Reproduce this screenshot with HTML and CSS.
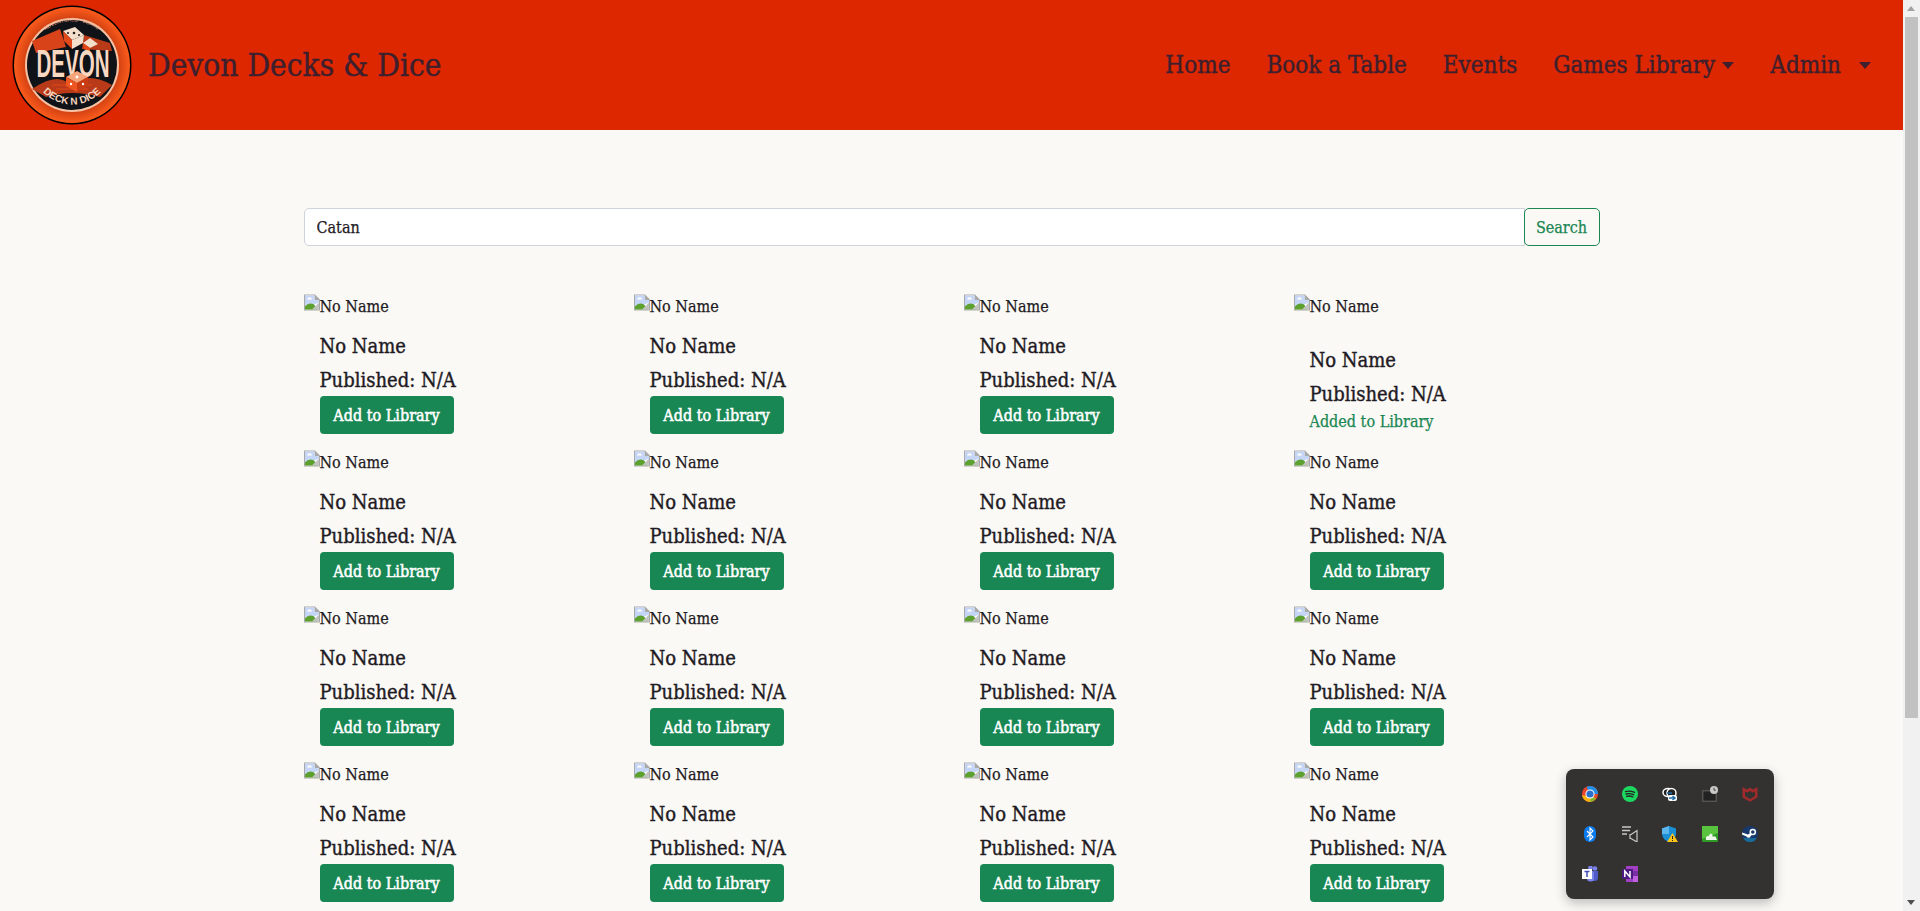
FILE: index.html
```html
<!DOCTYPE html>
<html lang="en">
<head>
  <meta charset="UTF-8">
  <title>Devon Decks &amp; Dice</title>
  <link rel="stylesheet" href="styles.css">
</head>
<body>
  <div class="window">
    <div class="page">
      <!-- Navbar -->
      <nav class="navbar">
        <a class="brand" href="#">
          <svg class="logo" viewBox="0 0 120 120">
            <defs>
              <path id="logo-arc" d="M22 72 A40 40 0 0 0 98 72"/>
              <path id="logo-top" d="M20 42 A44 44 0 0 1 100 42"/>
              <radialGradient id="logo-ring">
                <stop offset=".75" stop-color="#c83a10"/>
                <stop offset="1" stop-color="#fb5c1c"/>
              </radialGradient>
            </defs>
            <circle cx="60" cy="60" r="59.500" fill="#000"/>
            <circle cx="60" cy="60" r="58" fill="url(#logo-ring)"/>
            <circle cx="60" cy="60" r="47" fill="#f6c3a6"/>
            <circle cx="60" cy="60" r="45" fill="#0f1216"/>
            <path d="M20 36 L48 24 L54 42 L24 48 Z" fill="#d8431a"/>
            <path d="M72 30 L98 38 L100 46 L70 44 Z" fill="#b83a18"/>
            <path d="M20 84 Q46 66 58 80 Q76 66 100 80 L88 92 Q60 84 34 92 Z" fill="#b83a18"/>
            <path d="M44 84h32M40 80h40" stroke="#e2481a" stroke-width="1"/>
            <!-- top dice -->
            <path d="M51 26 L63 22 L72 30 L60 35 Z" fill="#f4dfcc"/>
            <path d="M51 26 L60 35 L60 44 L52 36 Z" fill="#e2481a"/>
            <path d="M60 35 L72 30 L71 38 L60 44 Z" fill="#f4dfcc"/>
            <circle cx="62" cy="28" r="1.300" fill="#222"/>
            <circle cx="56" cy="28" r="1.100" fill="#222"/>
            <circle cx="67" cy="30" r="1.100" fill="#222"/>
            <path d="M71 38 L78 33 L86 39 L78 43 Z" fill="#f4dfcc"/>
            <path d="M71 38 L78 43 L78 48 L72 44 Z" fill="#e2481a"/>
            <text class="logo-small" font-size="5"><textPath href="#logo-top" startOffset="50%" text-anchor="middle">ADVENTURES &#183; BOARD</textPath></text>
            <text class="logo-title" transform="translate(61 72) scale(.54 1)">DEVON</text>
            <!-- bottom dice -->
            <path d="M54 72 L65 66 L76 72 L65 78 Z" fill="#f6a47a"/>
            <path d="M54 72 L65 78 L65 87 L54 81 Z" fill="#ef5520"/>
            <path d="M65 78 L76 72 L76 81 L65 87 Z" fill="#c93c14"/>
            <circle cx="65" cy="72" r="1.400" fill="#fff"/>
            <circle cx="59" cy="79" r="1.200" fill="#fff"/>
            <circle cx="71" cy="79" r="1.200" fill="#fff"/>
            <text class="logo-arc" font-size="10"><textPath href="#logo-arc" startOffset="50%" text-anchor="middle">DECK N DICE</textPath></text>
          </svg>
          <span class="brand-name">Devon Decks &amp; Dice</span>
        </a>
        <ul class="nav-links">
          <li class="nav-item"><a href="#">Home</a></li>
          <li class="nav-item"><a href="#">Book a Table</a></li>
          <li class="nav-item"><a href="#">Events</a></li>
          <li class="nav-item"><a href="#">Games Library</a><i class="caret"></i></li>
          <li class="nav-item nav-admin"><a href="#">Admin</a><i class="caret"></i></li>
        </ul>
      </nav>

      <main class="container">
        <!-- Search -->
        <form class="search">
          <input class="search-input" type="text" value="Catan">
          <button class="search-btn" type="button">Search</button>
        </form>

        <!-- Results -->
        <div class="results">
          <div class="game">
            <div class="game-img"><svg class="broken"><use href="#broken-img"/></svg>No Name</div>
            <div class="game-body"><h5>No Name</h5><p>Published: N/A</p><button class="add-btn" type="button">Add to Library</button></div>
          </div>
          <div class="game">
            <div class="game-img"><svg class="broken"><use href="#broken-img"/></svg>No Name</div>
            <div class="game-body"><h5>No Name</h5><p>Published: N/A</p><button class="add-btn" type="button">Add to Library</button></div>
          </div>
          <div class="game">
            <div class="game-img"><svg class="broken"><use href="#broken-img"/></svg>No Name</div>
            <div class="game-body"><h5>No Name</h5><p>Published: N/A</p><button class="add-btn" type="button">Add to Library</button></div>
          </div>
          <div class="game">
            <div class="game-img"><svg class="broken"><use href="#broken-img"/></svg>No Name</div>
            <div class="game-body"><h5>No Name</h5><p>Published: N/A</p><div class="added">Added to Library</div></div>
          </div>

          <div class="game">
            <div class="game-img"><svg class="broken"><use href="#broken-img"/></svg>No Name</div>
            <div class="game-body"><h5>No Name</h5><p>Published: N/A</p><button class="add-btn" type="button">Add to Library</button></div>
          </div>
          <div class="game">
            <div class="game-img"><svg class="broken"><use href="#broken-img"/></svg>No Name</div>
            <div class="game-body"><h5>No Name</h5><p>Published: N/A</p><button class="add-btn" type="button">Add to Library</button></div>
          </div>
          <div class="game">
            <div class="game-img"><svg class="broken"><use href="#broken-img"/></svg>No Name</div>
            <div class="game-body"><h5>No Name</h5><p>Published: N/A</p><button class="add-btn" type="button">Add to Library</button></div>
          </div>
          <div class="game">
            <div class="game-img"><svg class="broken"><use href="#broken-img"/></svg>No Name</div>
            <div class="game-body"><h5>No Name</h5><p>Published: N/A</p><button class="add-btn" type="button">Add to Library</button></div>
          </div>

          <div class="game">
            <div class="game-img"><svg class="broken"><use href="#broken-img"/></svg>No Name</div>
            <div class="game-body"><h5>No Name</h5><p>Published: N/A</p><button class="add-btn" type="button">Add to Library</button></div>
          </div>
          <div class="game">
            <div class="game-img"><svg class="broken"><use href="#broken-img"/></svg>No Name</div>
            <div class="game-body"><h5>No Name</h5><p>Published: N/A</p><button class="add-btn" type="button">Add to Library</button></div>
          </div>
          <div class="game">
            <div class="game-img"><svg class="broken"><use href="#broken-img"/></svg>No Name</div>
            <div class="game-body"><h5>No Name</h5><p>Published: N/A</p><button class="add-btn" type="button">Add to Library</button></div>
          </div>
          <div class="game">
            <div class="game-img"><svg class="broken"><use href="#broken-img"/></svg>No Name</div>
            <div class="game-body"><h5>No Name</h5><p>Published: N/A</p><button class="add-btn" type="button">Add to Library</button></div>
          </div>

          <div class="game">
            <div class="game-img"><svg class="broken"><use href="#broken-img"/></svg>No Name</div>
            <div class="game-body"><h5>No Name</h5><p>Published: N/A</p><button class="add-btn" type="button">Add to Library</button></div>
          </div>
          <div class="game">
            <div class="game-img"><svg class="broken"><use href="#broken-img"/></svg>No Name</div>
            <div class="game-body"><h5>No Name</h5><p>Published: N/A</p><button class="add-btn" type="button">Add to Library</button></div>
          </div>
          <div class="game">
            <div class="game-img"><svg class="broken"><use href="#broken-img"/></svg>No Name</div>
            <div class="game-body"><h5>No Name</h5><p>Published: N/A</p><button class="add-btn" type="button">Add to Library</button></div>
          </div>
          <div class="game">
            <div class="game-img"><svg class="broken"><use href="#broken-img"/></svg>No Name</div>
            <div class="game-body"><h5>No Name</h5><p>Published: N/A</p><button class="add-btn" type="button">Add to Library</button></div>
          </div>
        </div>
      </main>
    </div>

    <!-- Scrollbar -->
    <div class="scrollbar">
      <i class="arrow-up"></i>
      <div class="track"><div class="thumb"></div></div>
      <i class="arrow-down"></i>
    </div>
  </div>

  <!-- Tray popup -->
  <div class="tray">
    <!-- browser -->
    <svg viewBox="0 0 16 16"><circle cx="8" cy="8" r="8" fill="#e8452c"/><path d="M8 0A8 8 0 0 1 16 8L11 8 5 2.500 5 .6Z" fill="#1f8fe8"/><path d="M0 9A8 8 0 0 0 8 16 8 8 0 0 0 14 12L9 11Z" fill="#f9b10f"/><path d="M8 16A8 8 0 0 0 14 12L9 11Z" fill="#7cb82f"/><circle cx="8" cy="8" r="4.600" fill="#fff"/><circle cx="8" cy="8" r="3.600" fill="#2a6fc9"/></svg>
    <!-- spotify -->
    <svg viewBox="0 0 16 16"><circle cx="8" cy="8" r="8" fill="#1ed760"/><path d="M3.500 5.600Q8 4.300 12.500 6.400M4 8Q8 7 11.800 8.800M4.600 10.300Q8 9.500 11 11" fill="none" stroke="#222" stroke-width="1.300" stroke-linecap="round"/></svg>
    <!-- link -->
    <svg viewBox="0 0 16 16"><ellipse cx="6" cy="6.500" rx="5" ry="4" fill="#222" stroke="#fff" stroke-width="1.500"/><ellipse cx="9.500" cy="7" rx="4.500" ry="4.500" fill="#222" stroke="#fff" stroke-width="1.500"/><rect x="6" y="9" width="9" height="6" rx="2" fill="#fff"/><path d="M7 12h6M10.500 10l2.500 2-2.500 2M5 7h5" fill="none" stroke="#1f6aa8" stroke-width="1.500"/></svg>
    <!-- capture -->
    <svg viewBox="0 0 16 16"><rect x=".7" y="4.700" width="13.600" height="10.600" fill="#222" stroke="#555" stroke-width="1.400"/><circle cx="12" cy="4" r="4" fill="#c8c8c8"/><path d="M12 1.800v2.400h1.800" fill="none" stroke="#444" stroke-width="1"/></svg>
    <!-- mcafee -->
    <svg viewBox="0 0 16 16"><path d="M.5 1L4.800 3.500 8 1.800 11.200 3.500 15.500 1V11.500L8 15.800.5 11.500ZM3 5.500V10L8 13 13 10V5.500L11 6.800 8 5 5 6.800Z" fill="#a12a2c"/></svg>

    <!-- bluetooth -->
    <svg viewBox="0 0 16 16"><rect x="2" y="0" width="12" height="16" rx="6" fill="#0a7cf0"/><path d="M5 5l6 6-3 3V2l3 3-6 6" fill="none" stroke="#fff" stroke-width="1.100"/></svg>
    <!-- speaker -->
    <svg viewBox="0 0 16 16"><path d="M0 1h9M0 4.500h8M0 8h5" stroke="#c8c8c8" stroke-width="1.300"/><path d="M9 8.500L15 4.500V16L9 12.500H8V8.500z" fill="none" stroke="#c8c8c8" stroke-width="1.200"/></svg>
    <!-- defender -->
    <svg viewBox="0 0 16 16"><path d="M7 0L14 2.500V8Q14 13 7 16Q0 13 0 8V2.500z" fill="#1a8fd6"/><path d="M7 0L0 2.500V8H7z" fill="#5cb8ec"/><path d="M10.500 7L16 16H5z" fill="#fcc419"/><path d="M10.500 10v3M10.500 14v1" stroke="#222" stroke-width="1"/></svg>
    <!-- green app -->
    <svg viewBox="0 0 16 16"><rect width="16" height="16" rx="1" fill="#2f9a26"/><path d="M0 0h16V7L0 13z" fill="#59c23f"/><path d="M4 14Q3 10 6.500 10L8.500 7.500 10.500 8.500V10.500H13.500L15 14z" fill="#eef5ea"/></svg>
    <!-- steam -->
    <svg viewBox="0 0 16 16"><circle cx="8" cy="8" r="8" fill="#17396b"/><path d="M1 12A8 8 0 0 0 15 12z" fill="#1a6a9a"/><path d="M0 8.500l4.500 2a2.300 2.300 0 0 0 4.300-.5l2-2-2-1-3 1.500L.2 6.500z" fill="#fff"/><circle cx="10.800" cy="6" r="3.300" fill="#fff"/><circle cx="10.800" cy="6" r="1.800" fill="#17396b"/></svg>

    <!-- teams -->
    <svg viewBox="0 0 16 16"><circle cx="13" cy="2.500" r="2.300" fill="#7b83eb"/><path d="M9 5h7v6.500a3.500 3.500 0 0 1-7 0z" fill="#5059c9"/><circle cx="8.500" cy="2" r="2.400" fill="#7b83eb"/><rect x="5" y="4.500" width="7" height="11" rx="3" fill="#7b83eb"/><rect y="3" width="10" height="10" fill="#fff"/><path d="M2.500 5.500h5M5 5.500V11" stroke="#464eb8" stroke-width="1.500"/></svg>
    <!-- onenote -->
    <svg viewBox="0 0 16 16"><rect x="4" width="12" height="16" fill="#a33fc4"/><path d="M11 5h5v5h-5z" fill="#7a2fa3"/><path d="M11 10h5v6h-5z" fill="#c060e0"/><rect y="3" width="11" height="10" fill="#4d1a80"/><path d="M2.800 11V5L8 11V5" fill="none" stroke="#fff" stroke-width="1.500"/></svg>
  </div>

  <!-- Broken image icon -->
  <svg class="defs">
    <symbol id="broken-img" viewBox="0 0 16 16">
      <path d="M0 0h11L16 5V16H0z" fill="#a9a9a9"/>
      <path d="M1 1h9.500v4.500H15V15H1z" fill="#fff"/>
      <path d="M1 1h9.500v4.500H15V8L1 14z" fill="#c5d5f5"/>
      <path d="M1 15V12Q5 7 10 10L14 15z" fill="#5ca02e"/>
      <path d="M8 15L15 8v7z" fill="#c3c3c3"/>
      <path d="M3 5h5L7 3H4z" fill="#fff"/>
    </symbol>
  </svg>
</body>
</html>
```

FILE: styles.css
```css
/* General styling */
* {
  box-sizing: border-box;
}

body {
  margin: 0;
  font-family: "DejaVu Serif Condensed", "DejaVu Serif", serif;
  font-size: 16px;
  line-height: 24px;
  color: #1f1b24;
  background-color: #fbf9f5;
  -webkit-text-stroke: .25px;
}

.window {
  display: flex;
  height: 100vh;
  overflow: hidden;
}

.page {
  flex: 1;
  min-width: 0;
}

/* Navbar */
.navbar {
  display: flex;
  justify-content: space-between;
  align-items: center;
  height: 130px;
  padding: 0 14px 0 12px;
  background-color: #dd2700;
  color: #3d1f2e;
}

.brand {
  display: flex;
  align-items: center;
  gap: 16px;
  color: inherit;
  text-decoration: none;
}

.logo {
  width: 120px;
  height: 120px;
}

.logo text {
  -webkit-text-stroke: 0;
}

.logo-title {
  font-family: "Liberation Sans", sans-serif;
  font-weight: 700;
  font-size: 38px;
  text-anchor: middle;
  fill: #f8d8c2;
}

.logo-small {
  font-family: "Liberation Sans", sans-serif;
  fill: #f0b090;
}

.logo-arc {
  font-family: "Liberation Sans", sans-serif;
  font-weight: 700;
  fill: #f8d8c2;
}

.brand-name {
  font-size: 31.4px;
  line-height: 36px;
  -webkit-text-stroke: .4px;
}

.nav-links {
  display: flex;
  align-items: center;
  margin: 0;
  padding: 0;
  list-style: none;
  font-size: 24px;
  line-height: 36px;
  -webkit-text-stroke: .4px;
}

.nav-item {
  display: flex;
  align-items: center;
  padding: 0 18px;
}

.nav-item a {
  color: inherit;
  text-decoration: none;
  white-space: nowrap;
}

.caret {
  width: 0;
  height: 0;
  margin-left: 7px;
  border-top: 7px solid #3d1f2e;
  border-left: 6.5px solid transparent;
  border-right: 6.5px solid transparent;
}

.nav-admin .caret {
  margin-left: 18px;
}

/* Search and results */
.container {
  width: 1320px;
  margin: 0 auto;
  padding: 78px 12px 0;
}

.search {
  display: flex;
  margin-bottom: 48px;
}

.search-input {
  flex: 1;
  height: 38px;
  padding: 6px 12px;
  border: 1px solid #ced4da;
  border-radius: 5px 0 0 5px;
  background-color: #fff;
  color: #1f1b24;
  font: inherit;
}

.search-btn {
  width: 76px;
  height: 38px;
  margin-left: -1px;
  padding: 2px 0 0;
  border: 1px solid #198754;
  border-radius: 5px;
  background: none;
  color: #198754;
  font: inherit;
}

.results {
  display: grid;
  grid-template-columns: repeat(4, 1fr);
  column-gap: 24px;
}

.game {
  display: flex;
  flex-direction: column;
  height: 156px;
}

.game-img {
  height: 24px;
}

.broken {
  width: 16px;
  height: 17px;
  vertical-align: 1px;
}

.defs {
  display: none;
}

.game-body {
  margin-top: auto;
  padding: 16px;
}

.game-body h5 {
  margin: 0 0 10px;
  font-size: 20px;
  line-height: 24px;
  font-weight: 400;
  -webkit-text-stroke: .4px;
}

.game-body p {
  margin: 0 0 4px;
  font-size: 20px;
  line-height: 24px;
  -webkit-text-stroke: .4px;
}

.add-btn {
  display: block;
  width: 134px;
  height: 38px;
  padding: 2px 0 0;
  border: none;
  border-radius: 4px;
  background-color: #198754;
  color: #fff;
  font: inherit;
  -webkit-text-stroke: .5px;
}

.added {
  color: #198754;
}

/* Scrollbar */
.scrollbar {
  display: flex;
  flex-direction: column;
  flex: none;
  width: 17px;
  background-color: #f1f1f1;
}

.track {
  flex: 1;
  padding: 0 2px;
}

.thumb {
  height: 701px;
  background-color: #c1c1c1;
}

.arrow-up, .arrow-down {
  width: 17px;
  height: 17px;
  flex: none;
  position: relative;
}

.arrow-up::after, .arrow-down::after {
  content: "";
  position: absolute;
  left: 4px;
  border-left: 4.5px solid transparent;
  border-right: 4.5px solid transparent;
}

.arrow-up::after {
  top: 6px;
  border-bottom: 5px solid #a3a3a3;
}

.arrow-down::after {
  top: 6px;
  border-top: 5px solid #505050;
}

/* Tray popup */
.tray {
  position: absolute;
  left: 1566px;
  top: 769px;
  display: grid;
  grid-template-columns: repeat(5, 16px);
  grid-auto-rows: 16px;
  gap: 24px;
  width: 208px;
  height: 130px;
  padding: 17px 16px;
  border-radius: 8px;
  background-color: #333231;
  box-shadow: 0 4px 12px rgba(0, 0, 0, .25);
}

.tray svg {
  width: 16px;
  height: 16px;
}
```
